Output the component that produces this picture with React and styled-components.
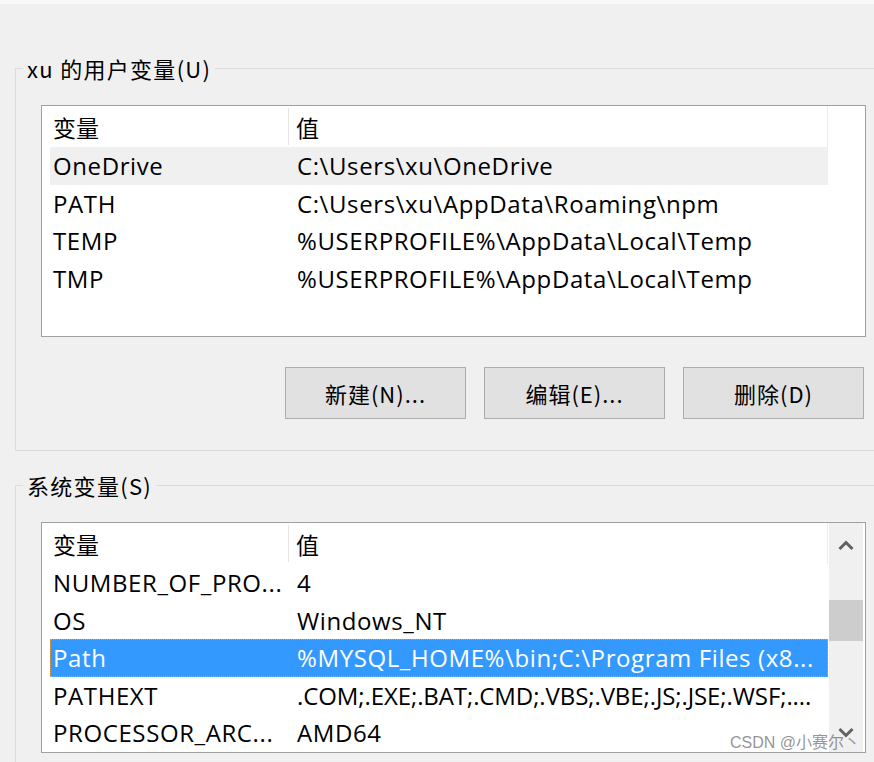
import React from 'react';
import styled, { createGlobalStyle } from 'styled-components';

const GlobalStyle = createGlobalStyle`
  html, body {
    margin: 0;
    padding: 0;
    background: #f0f0f0;
  }
  body {
    font-family: "Open Sans", "Noto Sans CJK SC", sans-serif;
    color: #000;
  }
`;

const Page = styled.div`
  position: relative;
  width: 874px;
  height: 762px;
  overflow: hidden;
  box-sizing: border-box;
  background: #f0f0f0;
  border-top: 4px solid #f9f9f9;
`;

const Group = styled.fieldset`
  margin: ${p => p.$top}px 0 0 15px;
  padding: 0 0 ${p => p.$bottom}px 0;
  border: 1px solid #dcdcdc;
  border-right: none;
  min-width: 0;
`;

const Legend = styled.legend`
  margin-left: 7px;
  padding: 0 4px;
  font-family: "Noto Sans CJK SC", sans-serif;
  font-size: 22px;
  line-height: 26px;
  letter-spacing: 1.3px;
`;

const GroupBody = styled.div`
  padding: 24px 0 0 25px;
`;

const ListBox = styled.div`
  width: 825px;
  height: ${p => p.$h}px;
  box-sizing: border-box;
  border: 1px solid #a0a0a0;
  background: #fff;
  display: flex;
  overflow: hidden;
`;

const ListBody = styled.div`
  width: 778px;
  padding-left: 8px;
  display: flex;
  flex-direction: column;
`;

const HeaderRow = styled.div`
  display: grid;
  grid-template-columns: 239px 1fr;
  height: 41px;
  border-right: 1px solid #ececec;
`;

const HeaderCell = styled.div`
  display: flex;
  align-items: center;
  padding-left: ${p => p.$pad}px;
  margin: 2px 0;
  border-right: ${p => (p.$divider ? '1px solid #e5e5e5' : 'none')};
  font-family: "Noto Sans CJK SC", sans-serif;
  font-size: 23px;
`;

const Row = styled.div`
  display: grid;
  grid-template-columns: 239px 1fr;
  height: 37.5px;
  box-sizing: border-box;
  font-size: 24px;
  white-space: nowrap;
  background: ${p => (p.$sel === 'active' ? '#3399ff' : p.$sel === 'inactive' ? '#f0f0f0' : 'transparent')};
  color: ${p => (p.$sel === 'active' ? '#fff' : '#000')};
  border: 1px dotted ${p => (p.$sel === 'active' ? '#d99a5a' : 'transparent')};
`;

const Cell = styled.div`
  display: flex;
  align-items: center;
  padding-left: ${p => p.$pad}px;
  letter-spacing: ${p => (p.$tight ? '-0.1px' : '0.6px')};
  overflow: hidden;
`;

const ScrollBar = styled.div`
  width: 34px;
  margin-left: 1px;
  background: #f0f0f0;
  display: flex;
  flex-direction: column;
`;

const ArrowButton = styled.div`
  height: ${p => p.$h}px;
  display: flex;
  align-items: center;
  justify-content: center;
`;

const Track = styled.div`
  flex: 1;
  padding-top: 33px;
`;

const Thumb = styled.div`
  height: 41px;
  background: #cdcdcd;
`;

const ButtonRow = styled.div`
  width: 823px;
  margin-top: 30px;
  display: flex;
  justify-content: flex-end;
  gap: 18px;
`;

const Button = styled.div`
  width: 181px;
  height: 52px;
  box-sizing: border-box;
  border: 1px solid #adadad;
  background: #e1e1e1;
  display: flex;
  align-items: center;
  justify-content: center;
  font-family: "Noto Sans CJK SC", sans-serif;
  font-size: 22px;
  letter-spacing: 1px;
`;

const Watermark = styled.div`
  position: absolute;
  right: 14px;
  bottom: 9px;
  font-family: "Liberation Sans", "Noto Sans CJK SC", sans-serif;
  font-size: 16px;
  color: rgba(120, 120, 120, 0.8);
`;

const Chevron = ({ down }) => (
  <svg width="16" height="11" viewBox="0 0 16 11">
    <path
      d={down ? 'M1.5 2 L8 8.5 L14.5 2' : 'M1.5 9 L8 2.5 L14.5 9'}
      fill="none"
      stroke="#606060"
      strokeWidth="3"
    />
  </svg>
);

const userVars = [
  ['OneDrive', 'C:\\Users\\xu\\OneDrive', 'inactive'],
  ['PATH', 'C:\\Users\\xu\\AppData\\Roaming\\npm'],
  ['TEMP', '%USERPROFILE%\\AppData\\Local\\Temp'],
  ['TMP', '%USERPROFILE%\\AppData\\Local\\Temp'],
];

// 4th field: squeeze the punctuation-heavy value so it fits like the original
const sysVars = [
  ['NUMBER_OF_PRO...', '4'],
  ['OS', 'Windows_NT'],
  ['Path', '%MYSQL_HOME%\\bin;C:\\Program Files (x8...', 'active'],
  ['PATHEXT', '.COM;.EXE;.BAT;.CMD;.VBS;.VBE;.JS;.JSE;.WSF;....', null, true],
  ['PROCESSOR_ARC...', 'AMD64'],
];

const VarList = ({ rows, height, scroll }) => (
  <ListBox $h={height}>
    <ListBody>
      <HeaderRow>
        <HeaderCell $pad={3} $divider>变量</HeaderCell>
        <HeaderCell $pad={7}>值</HeaderCell>
      </HeaderRow>
      {rows.map(([name, value, sel, tight]) => (
        <Row key={name} $sel={sel}>
          <Cell $pad={2}>{name}</Cell>
          <Cell $pad={7} $tight={tight}>{value}</Cell>
        </Row>
      ))}
    </ListBody>
    {scroll && (
      <ScrollBar>
        <ArrowButton $h={44}><Chevron /></ArrowButton>
        <Track><Thumb /></Track>
        <ArrowButton $h={40}><Chevron down /></ArrowButton>
      </ScrollBar>
    )}
  </ListBox>
);

export default function App() {
  return (
    <Page>
      <GlobalStyle />
      <Group $top={51} $bottom={31}>
        <Legend>xu 的用户变量(U)</Legend>
        <GroupBody>
          <VarList rows={userVars} height={232} />
          <ButtonRow>
            <Button>新建(N)...</Button>
            <Button>编辑(E)...</Button>
            <Button>删除(D)</Button>
          </ButtonRow>
        </GroupBody>
      </Group>
      <Group $top={21} $bottom={40}>
        <Legend>系统变量(S)</Legend>
        <GroupBody>
          <VarList rows={sysVars} height={231} scroll />
        </GroupBody>
      </Group>
      <Watermark>CSDN @小赛尔丶</Watermark>
    </Page>
  );
}
